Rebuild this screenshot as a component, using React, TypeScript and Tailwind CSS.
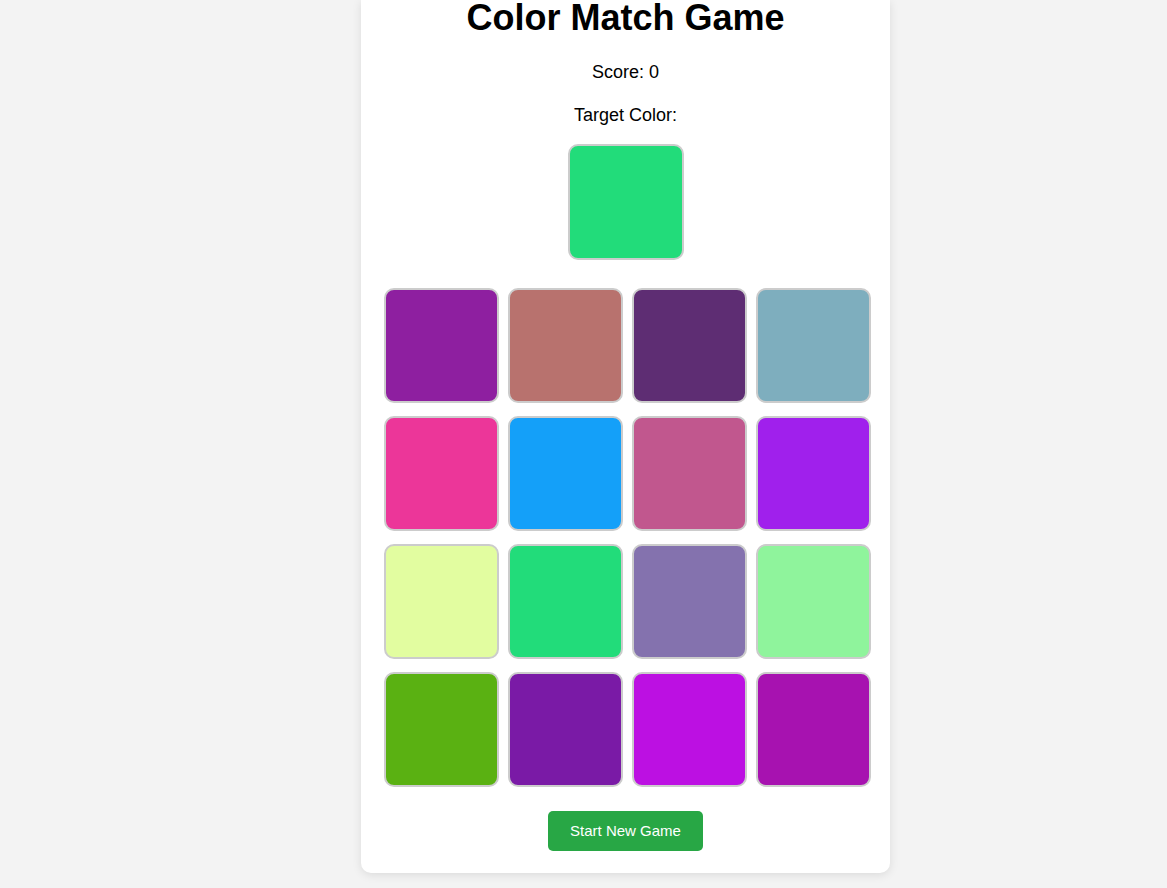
import React from "react";

const TARGET = "#22dc7a";

const SWATCHES = [
  "#8e1fa0", "#b8726e", "#5e2d73", "#7eaebe",
  "#ec3699", "#14a0f9", "#c1578e", "#a020ec",
  "#e2fda0", "#22dc7a", "#8472ae", "#8ff49c",
  "#5ab112", "#7a1aa6", "#bc10e2", "#a712b0",
];

export default function App() {
  return (
    <div className="min-h-screen bg-[#f3f3f3] pb-[16px] pl-[361px] font-['Liberation_Sans',Arial,sans-serif] text-black">
      <div className="w-[529px] rounded-b-[10px] bg-white pb-[22px] shadow-[0_2px_10px_rgba(0,0,0,0.1)]">
        <h1 className="text-center text-[36px] font-bold leading-none">Color Match Game</h1>

        <p className="mt-[26px] text-center text-[18px] leading-[21px]">Score: 0</p>
        <p className="mt-[22px] text-center text-[18px] leading-[21px]">Target Color:</p>

        <div className="mt-[18px] flex justify-center">
          <div
            className="h-[116px] w-[116px] rounded-[10px] border-2 border-[#cccccc]"
            style={{ backgroundColor: TARGET }}
          />
        </div>

        {/* the 16 choices */}
        <div className="mt-[28px] grid w-fit grid-cols-[repeat(4,115px)] gap-x-[9px] gap-y-[13px] pl-[23px]">
          {SWATCHES.map((c, i) => (
            <button
              key={i}
              className="h-[115px] w-[115px] cursor-pointer rounded-[10px] border-2 border-[#cccccc]"
              style={{ backgroundColor: c }}
            />
          ))}
        </div>

        <div className="mt-[24px] flex justify-center">
          <button className="h-[40px] rounded-[5px] bg-[#28a745] px-[22px] text-[15px] text-white">
            Start New Game
          </button>
        </div>
      </div>
    </div>
  );
}
